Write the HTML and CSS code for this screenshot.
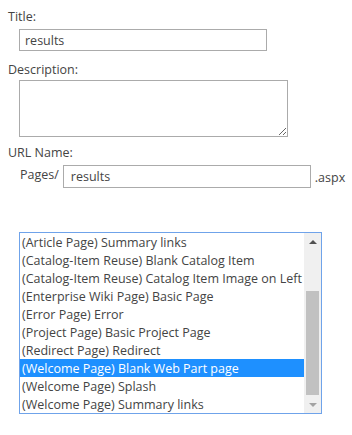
FILE: index.html
```html
<!DOCTYPE html>
<html>
<head>
<meta charset="utf-8">
<link rel="stylesheet" href="styles.css">
</head>
<body>
<div class="form">
  <div class="label label-title">Title:</div>
  <div class="field field-title"><input class="text title-input" type="text" value="results"></div>
  <div class="label label-desc">Description:</div>
  <div class="field field-desc"><textarea class="desc"></textarea></div>
  <div class="label label-url">URL Name:</div>
  <div class="url-row">
    <span class="prefix">Pages/</span>
    <input class="text url-input" type="text" value="results">
    <span class="suffix">.aspx</span>
  </div>
  <div class="listbox">
    <div class="options">
      <div class="option">(Article Page) Summary links</div>
      <div class="option">(Catalog-Item Reuse) Blank Catalog Item</div>
      <div class="option">(Catalog-Item Reuse) Catalog Item Image on Left</div>
      <div class="option">(Enterprise Wiki Page) Basic Page</div>
      <div class="option">(Error Page) Error</div>
      <div class="option">(Project Page) Basic Project Page</div>
      <div class="option">(Redirect Page) Redirect</div>
      <div class="option selected">(Welcome Page) Blank Web Part page</div>
      <div class="option">(Welcome Page) Splash</div>
      <div class="option">(Welcome Page) Summary links</div>
    </div>
    <div class="scrollbar">
      <div class="arrow arrow-up"></div>
      <div class="track">
        <div class="thumb"></div>
      </div>
      <div class="arrow arrow-down"></div>
    </div>
  </div>
</div>
</body>
</html>
```
FILE: styles.css
```css
html, body {
  margin: 0;
  padding: 0;
  background: #ffffff;
}
body {
  font-family: "Open Sans", "Noto Sans", sans-serif;
  font-size: 12.5px;
  color: #444444;
}
.form {
  padding: 9px 0 0 8px;
}
.label {
  line-height: 16px;
  height: 16px;
  white-space: nowrap;
}
.field {
  padding-left: 11px;
}
.field-title {
  margin-top: 4px;
  height: 22px;
}
.text {
  box-sizing: border-box;
  border: 1px solid #ababab;
  border-radius: 0;
  background: #fff;
  font-family: "Open Sans", "Noto Sans", sans-serif;
  font-size: 12.5px;
  color: #444444;
  padding: 0 5px;
  margin: 0;
  outline: none;
  display: block;
}
.title-input {
  width: 248px;
  height: 22px;
}
.label-desc {
  margin-top: 11px;
}
.field-desc {
  margin-top: 2px;
  height: 57px;
}
.desc {
  box-sizing: border-box;
  display: block;
  width: 269px;
  height: 57px;
  border: 1px solid #ababab;
  margin: 0;
  padding: 2px 5px;
  resize: both;
  font-family: "Open Sans", "Noto Sans", sans-serif;
  font-size: 12.5px;
  outline: none;
}
.label-url {
  margin-top: 8px;
}
.url-row {
  display: flex;
  align-items: center;
  margin-top: 4px;
  padding-left: 12px;
  height: 23px;
  white-space: nowrap;
}
.prefix {
  margin-right: 4px;
  position: relative;
  top: -2px;
}
.url-input {
  width: 248px;
  height: 23px;
  padding-left: 7px;
}
.suffix {
  margin-left: 4px;
  position: relative;
  top: 1px;
}
.listbox {
  box-sizing: border-box;
  margin-top: 44px;
  margin-left: 11px;
  width: 303px;
  height: 182px;
  border: 1px solid #6fa3ea;
  display: flex;
  overflow: hidden;
}
.options {
  flex: 1;
  overflow: hidden;
}
.option {
  height: 18px;
  line-height: 19px;
  padding-left: 2px;
  white-space: nowrap;
  overflow: hidden;
  color: #444444;
}
.option.selected {
  background: #1e90ff;
  color: #ffffff;
}
.scrollbar {
  width: 17px;
  background: #f0f0f0;
  display: flex;
  flex-direction: column;
}
.arrow {
  height: 17px;
  display: flex;
  align-items: center;
  justify-content: center;
}
.arrow::before {
  content: "";
  width: 0;
  height: 0;
  border-left: 4px solid transparent;
  border-right: 4px solid transparent;
}
.arrow-up::before {
  border-bottom: 4px solid #505050;
}
.arrow-down::before {
  border-top: 4px solid #a3a3a3;
}
.track {
  flex: 1;
  padding: 0 2px;
  display: flex;
  flex-direction: column;
}
.thumb {
  margin-top: 41px;
  height: 104px;
  background: #c1c1c1;
}
```
